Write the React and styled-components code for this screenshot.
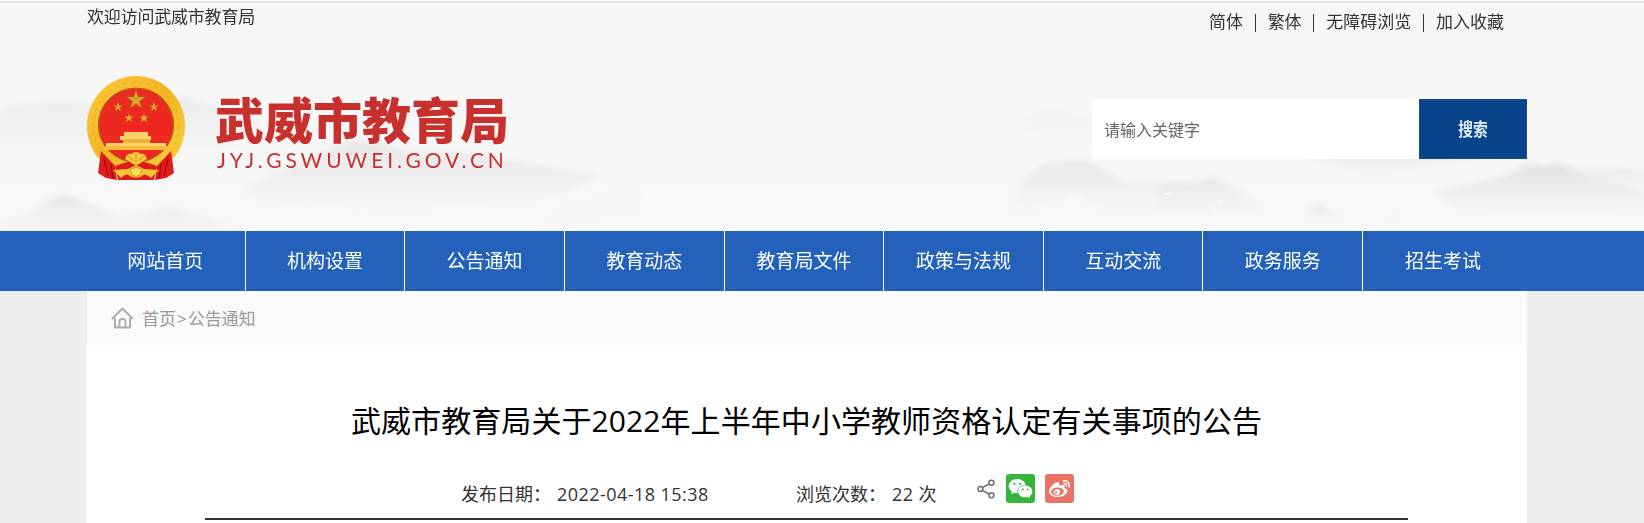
import React from "react";
import styled, { createGlobalStyle } from "styled-components";
import { AiFillWechat, AiOutlineWeibo } from "react-icons/ai";

const navItems = [
  "网站首页",
  "机构设置",
  "公告通知",
  "教育动态",
  "教育局文件",
  "政策与法规",
  "互动交流",
  "政务服务",
  "招生考试",
];

const topLinks = ["简体", "繁体", "无障碍浏览", "加入收藏"];

const star = (cx, cy, r) =>
  Array.from({ length: 10 }, (_, i) => {
    const a = (Math.PI / 5) * i - Math.PI / 2;
    const d = i % 2 ? r * 0.39 : r;
    return `${cx + d * Math.cos(a)},${cy + d * Math.sin(a)}`;
  }).join(" ");

const Emblem = () => (
  <svg width="98" height="105" viewBox="0 0 98 105">
    <defs>
      <linearGradient id="gold" x1="0" y1="0" x2="1" y2="1">
        <stop offset="0" stopColor="#fbc93a" />
        <stop offset="0.5" stopColor="#f3b425" />
        <stop offset="1" stopColor="#fdd441" />
      </linearGradient>
    </defs>
    <ellipse cx="49" cy="50" rx="49" ry="50" fill="url(#gold)" />
    <ellipse cx="49" cy="50" rx="43" ry="44" fill="none" stroke="#e3a824" strokeWidth="1" strokeDasharray="3 5" />
    <ellipse cx="49" cy="49" rx="37.5" ry="37" fill="#ec2820" stroke="#a8641a" strokeWidth="1.2" />
    <polygon points={star(49, 24, 10)} fill="#d9a52c" stroke="#a56a18" strokeWidth="0.6" />
    <polygon points={star(31, 31, 5)} fill="#dfa52c" stroke="#a56a18" strokeWidth="0.3" />
    <polygon points={star(67, 31, 5)} fill="#dfa52c" stroke="#a56a18" strokeWidth="0.3" />
    <polygon points={star(42, 42, 5)} fill="#dfa52c" stroke="#a56a18" strokeWidth="0.3" />
    <polygon points={star(57, 42, 5)} fill="#dfa52c" stroke="#a56a18" strokeWidth="0.3" />
    <path d="M37 56h24v4h3v4h-3v3h18v7H19v-7h17v-3h-3v-4h4z" fill="#ffd36a" />
    <path d="M36 63h27v4H36z" fill="#eeb235" />
    <path d="M18 70h62v4H18z" fill="#f8bd3b" />
    <path d="M14 75L28 90 30 104 19 102 11 97zM84 75L70 90 68 104 79 102 87 97z" fill="#e01b1c" />
    <path d="M17 83l4 17M81 83l-4 17M24 88l2 15M74 88l-2 15" stroke="#a40d12" strokeWidth="1.4" />
    <path d="M28 90l21-7 21 7-3 14H31z" fill="#dc1d1b" />
    <path d="M38 83q2-6 6-5 5-4 10 0 4-1 6 5l-5 3q-6 6-12 0z" fill="#fccb3b" />
    <path d="M42 80l4 5M49 78v8M56 80l-4 5" stroke="#c9851c" />
    <path d="M26 94l15-1 8-4 8 4 15 1-8 8q-7-6-9-2-6 3-12 0-3-4-9 2z" fill="#f8c437" />
    <path d="M43 94q6-5 12 0l-2 5q-4 3-8 0z" fill="#fddc57" stroke="#d49724" />
  </svg>
);

// misty ink-wash hills behind the banner
const Mountains = () => (
  <Scenery viewBox="0 0 1644 230" preserveAspectRatio="none">
    <defs>
      <filter id="soft" x="-20%" y="-40%" width="140%" height="180%">
        <feGaussianBlur stdDeviation="3" />
      </filter>
      <linearGradient id="mist" x1="0" y1="0" x2="0" y2="1">
        <stop offset="0" stopColor="#9a9c9a" stopOpacity="0.24" />
        <stop offset="1" stopColor="#b0b2b0" stopOpacity="0" />
      </linearGradient>
    </defs>
    <g fill="url(#mist)" filter="url(#soft)">
      <path d="M-10 110L15 104 60 101 110 103 150 100 178 94 210 104 245 112 260 125 240 142 120 160H-10z" opacity=".5" />
      <path d="M240 188L285 168 330 148 352 140 375 141 410 152 470 152 530 163 600 174 560 196 400 214 270 205z" opacity=".75" />
      <path d="M-10 222L30 213 50 198 65 193 90 204 125 215 168 205 200 214 225 220 250 234H-10z" opacity=".75" />
      <path d="M525 228L565 205 610 192 640 188V215z" opacity=".12" />
      <path d="M1008 215L1020 180 1045 162 1090 160 1125 180 1200 180 1212 174 1250 195 1275 218H1110L1075 192 1030 212z" opacity=".6" />
      <path d="M1150 214L1160 186 1212 178 1245 196 1262 218z" opacity=".35" />
      <path d="M1020 130Q1030 105 1060 110L1092 118V145z" opacity=".2" />
      <path d="M1300 218L1316 203 1350 218zM1370 218l25-5 25 5z" />
      <path d="M1290 150H1500L1430 165 1370 177z" opacity=".55" />
      <path d="M1435 190L1500 177 1528 163 1545 165 1560 162 1595 178 1650 192V208L1550 218 1455 208z" opacity=".95" />
      <path d="M1575 170L1595 166 1650 170V195z" opacity=".5" />
    </g>
    <g fill="#f9f9f8" opacity=".8">
      <path d="M1163 194q6-5 11-3-3 4-11 3z" />
      <circle cx="1214" cy="208" r="2.5" />
      <circle cx="1220" cy="201" r="2.5" />
    </g>
  </Scenery>
);

const HomeIcon = () => (
  <svg width="23" height="22" viewBox="0 0 23 22" fill="none" stroke="#adadad" strokeWidth="2">
    <path d="M1 12L11.5 1.5 22 12M4 11v9.5h15V11M8.5 20v-6q0-2 3-2t3 2v6" strokeLinejoin="round" />
  </svg>
);

const ShareIcon = () => (
  <svg width="18" height="20" viewBox="0 0 18 20" fill="none" stroke="#6e6e6e" strokeWidth="1.5">
    <path d="M5.5 8.7L12 5M5.5 11.3L12 15" />
    <circle cx="3.4" cy="10" r="2.4" />
    <circle cx="14.4" cy="3.8" r="2.5" />
    <circle cx="14.4" cy="16.2" r="2.5" />
  </svg>
);

const App = () => {
  return (
    <>
      <GlobalStyle />
      <Header>
        <Mountains />
        <HeaderContent>
          <TopBar>
            <Welcome>欢迎访问武威市教育局</Welcome>
            <TopLinks>
              {topLinks.map((label) => (
                <li key={label}>{label}</li>
              ))}
            </TopLinks>
          </TopBar>
          <Banner>
            <Logo>
              <Emblem />
              <LogoText>
                <SiteName>武威市教育局</SiteName>
                <SiteDomain>JYJ.GSWUWEI.GOV.CN</SiteDomain>
              </LogoText>
            </Logo>
            <SearchForm>
              <SearchInput placeholder="请输入关键字" />
              <SearchButton type="button"><span>搜索</span></SearchButton>
            </SearchForm>
          </Banner>
        </HeaderContent>
      </Header>

      <Nav>
        {navItems.map((item) => (
          <NavItem key={item}>{item}</NavItem>
        ))}
      </Nav>

      <Content>
        <Breadcrumb>
          <HomeIcon />
          <p>首页<Arrow>&gt;</Arrow>公告通知</p>
        </Breadcrumb>
        <Article>
          <Title>武威市教育局关于2022年上半年中小学教师资格认定有关事项的公告</Title>
          <Meta>
            <MetaItem $width={335}>
              发布日期：<MetaValue>2022-04-18 15:38</MetaValue>
            </MetaItem>
            <MetaItem $width={181}>
              浏览次数：<MetaValue>22 次</MetaValue>
            </MetaItem>
            <Share>
              <ShareIcon />
              <ShareButton $color="#35b53c"><AiFillWechat size={27} /></ShareButton>
              <ShareButton $color="#ea7262"><AiOutlineWeibo size={25} /></ShareButton>
            </Share>
          </Meta>
        </Article>
      </Content>
    </>
  );
};

export default App;

const GlobalStyle = createGlobalStyle`
  * {
    box-sizing: border-box;
    margin: 0;
    padding: 0;
  }

  body {
    background: #eee;
    color: #333;
    font-family: "Open Sans", "Noto Sans CJK SC", sans-serif;
    overflow: hidden;
  }

  ul {
    list-style: none;
  }
`;

const Header = styled.header`
  display: grid;
  height: 231px;
  border-top: 1px solid #fff;
  background: linear-gradient(#e6e8e6 2px, #f7f7f7 2px, #f7f7f7 180px, #f8f8f6 190px);
`;

const Scenery = styled.svg`
  grid-area: 1 / 1;
  width: 100%;
  height: 230px;
`;

const HeaderContent = styled.div`
  grid-area: 1 / 1;
  width: 1440px;
  margin-left: 87px;
`;

const TopBar = styled.div`
  display: flex;
  justify-content: space-between;
  height: 75px;
  padding-top: 4px;
  font-size: 17px;
  line-height: 24px;
`;

const Welcome = styled.p`
  letter-spacing: -0.2px;
`;

const TopLinks = styled.ul`
  display: flex;
  padding: 5px 23px 0 0;

  li + li::before {
    content: "";
    display: inline-block;
    width: 1px;
    height: 18px;
    margin: 0 12px 0 11.7px;
    vertical-align: -4px;
    background: #333;
  }
`;

const Banner = styled.div`
  display: flex;
  justify-content: space-between;
`;

const Logo = styled.div`
  display: flex;
  gap: 30px;
`;

const LogoText = styled.div`
  padding-top: 18px;
  color: #c8302e;
`;

const SiteName = styled.h1`
  font-size: 49px;
  font-weight: 900;
  line-height: 52px;
`;

const SiteDomain = styled.p`
  padding-left: 2px;
  font-family: Lato, sans-serif;
  font-size: 21px;
  line-height: 28px;
  letter-spacing: 3.9px;
`;

const SearchForm = styled.form`
  display: flex;
  width: 435px;
  height: 60px;
  margin-top: 23px;
`;

const SearchInput = styled.input`
  flex: 1;
  min-width: 0;
  padding: 2px 12px 0 12px;
  border: none;
  background: #fff;
  font: inherit;
  font-size: 16px;

  &::placeholder {
    color: #666;
  }
`;

const SearchButton = styled.button`
  width: 108px;
  padding-bottom: 2px;
  border: 1px solid #17498c;
  background: #09438b;
  color: #e4ecf6;
  font: inherit;
  font-size: 18px;
  font-weight: 700;

  span {
    display: inline-block;
    transform: scaleX(0.82);
  }
`;

const Nav = styled.nav`
  display: flex;
  height: 60px;
  padding-left: 86px;
  background: #2461ba;
`;

const NavItem = styled.a`
  width: 159.65px;
  border-right: 1px solid #fff;
  color: #fff;
  font-size: 19px;
  line-height: 60px;
  text-align: center;

  &:last-child {
    border-right: none;
  }
`;

const Content = styled.main`
  width: 1440px;
  height: 232px;
  margin-left: 87px;
  background: #fff;
`;

const Breadcrumb = styled.div`
  display: flex;
  align-items: center;
  gap: 8px;
  height: 54px;
  padding-left: 24px;
  background: #fafafa;
  color: #999;
  font-size: 17px;

  p {
    padding-bottom: 2px;
    letter-spacing: -0.1px;
  }
`;

const Arrow = styled.span`
  display: inline-block;
  width: 12px;
  text-align: center;
`;

const Article = styled.article`
  width: 1203px;
  height: 175px;
  margin-left: 118px;
  padding-top: 52px;
  border-bottom: 2px solid #333;
`;

const Title = styled.h2`
  color: #000;
  font-size: 30px;
  font-weight: 400;
  line-height: 48px;
  letter-spacing: 0.08px;
  text-align: center;
  white-space: nowrap;
`;

const Meta = styled.div`
  display: flex;
  padding: 29px 0 0 256px;
  font-size: 18px;
`;

const MetaItem = styled.p`
  width: ${(props) => props.$width}px;
  padding-top: 6px;
  line-height: 28px;
  white-space: nowrap;
`;

const MetaValue = styled.span`
  margin-left: 6px;
  letter-spacing: 0.45px;
`;

const Share = styled.div`
  display: flex;
  align-items: center;
  gap: 10.5px;
  height: 29px;
`;

const ShareButton = styled.a`
  display: flex;
  align-items: center;
  justify-content: center;
  width: 29px;
  height: 29px;
  border-radius: 3px;
  background: ${(props) => props.$color};
  color: #fff;
`;
